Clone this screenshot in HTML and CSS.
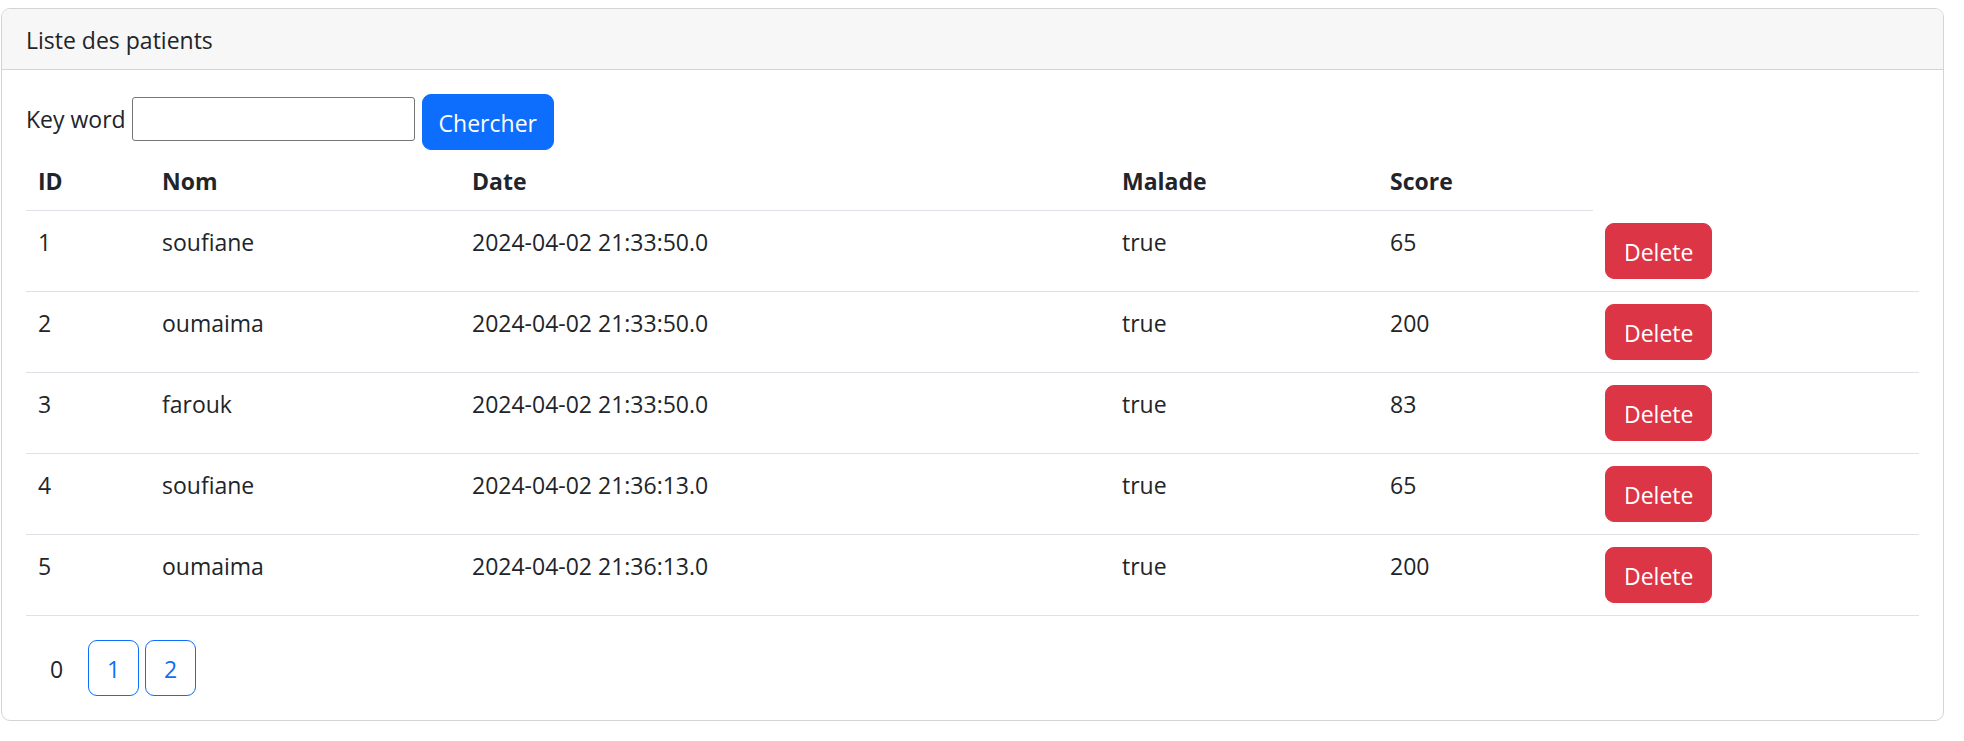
FILE: index.html
```html
<!DOCTYPE html>
<html lang="fr">
<head>
    <meta charset="UTF-8">
    <meta name="viewport" content="width=device-width, initial-scale=1.0">
    <title>Patients</title>
    <link rel="stylesheet" href="styles.css">
</head>
<body>

    <div class="card">
        <div class="card-header">Liste des patients</div>
        <div class="card-body">
            <form class="search" method="get">
                <label for="keyword">Key word</label>
                <input type="text" id="keyword" name="keyword">
                <button type="submit" class="btn btn-primary">Chercher</button>
            </form>

            <table class="table">
                <colgroup>
                    <col class="col-id">
                    <col class="col-nom">
                    <col class="col-date">
                    <col class="col-malade">
                    <col class="col-score">
                    <col>
                </colgroup>
                <thead>
                    <tr>
                        <th>ID</th>
                        <th>Nom</th>
                        <th>Date</th>
                        <th>Malade</th>
                        <th>Score</th>
                    </tr>
                </thead>
                <tbody>
                    <tr>
                        <td>1</td>
                        <td>soufiane</td>
                        <td>2024-04-02 21:33:50.0</td>
                        <td>true</td>
                        <td>65</td>
                        <td class="actions"><a class="btn btn-danger" href="#">Delete</a></td>
                    </tr>
                    <tr>
                        <td>2</td>
                        <td>oumaima</td>
                        <td>2024-04-02 21:33:50.0</td>
                        <td>true</td>
                        <td>200</td>
                        <td class="actions"><a class="btn btn-danger" href="#">Delete</a></td>
                    </tr>
                    <tr>
                        <td>3</td>
                        <td>farouk</td>
                        <td>2024-04-02 21:33:50.0</td>
                        <td>true</td>
                        <td>83</td>
                        <td class="actions"><a class="btn btn-danger" href="#">Delete</a></td>
                    </tr>
                    <tr>
                        <td>4</td>
                        <td>soufiane</td>
                        <td>2024-04-02 21:36:13.0</td>
                        <td>true</td>
                        <td>65</td>
                        <td class="actions"><a class="btn btn-danger" href="#">Delete</a></td>
                    </tr>
                    <tr>
                        <td>5</td>
                        <td>oumaima</td>
                        <td>2024-04-02 21:36:13.0</td>
                        <td>true</td>
                        <td>200</td>
                        <td class="actions"><a class="btn btn-danger" href="#">Delete</a></td>
                    </tr>
                </tbody>
            </table>

            <ul class="pages">
                <li><a class="btn page" href="#">0</a></li>
                <li><a class="btn page btn-outline-primary" href="#">1</a></li>
                <li><a class="btn page btn-outline-primary" href="#">2</a></li>
            </ul>
        </div>
    </div>

</body>
</html>
```

FILE: styles.css
```css
* {
    box-sizing: border-box;
}
body {
    margin: 0;
    font-family: "Segoe UI", "Open Sans", Arial, sans-serif;
    font-size: 23px;
    line-height: 36px;
    color: #212529;
    background-color: #fff;
}
.card {
    margin: 8px 20px 0 1px;
    border: 1px solid #d4d4d5;
    border-radius: 9px;
    overflow: hidden;
}
.card-header {
    padding: 13px 24px 11px;
    background-color: #f7f7f7;
    border-bottom: 1px solid #d4d4d5;
}
.card-body {
    padding: 24px;
}
.search {
    margin: 0;
}
.search input {
    width: 283px;
    height: 44px;
    margin: 0 1px 0 0;
    padding: 1px 3px;
    font: inherit;
    border: 1px solid #767676;
    border-radius: 3px;
}
.btn {
    display: inline-block;
    padding: 10px 18px 8px;
    font: inherit;
    line-height: 36px;
    text-align: center;
    text-decoration: none;
    vertical-align: middle;
    color: #212529;
    border: 1px solid transparent;
    border-radius: 9px;
    background-color: transparent;
    cursor: pointer;
}
.search .btn {
    padding-left: 16px;
    padding-right: 16px;
}
.btn-primary {
    color: #fff;
    background-color: #0d6efd;
    border-color: #0d6efd;
}
.btn-danger {
    color: #fff;
    background-color: #dc3545;
    border-color: #dc3545;
}
.btn-outline-primary {
    color: #0d6efd;
    border-color: #0d6efd;
}
.table {
    width: 100%;
    margin-bottom: 24px;
    border-collapse: collapse;
    table-layout: fixed;
}
.col-id { width: 124px; }
.col-nom { width: 310px; }
.col-date { width: 650px; }
.col-malade { width: 268px; }
.col-score { width: 215px; }
.table th,
.table td {
    padding: 13px 12px 11px;
    text-align: left;
    vertical-align: top;
    border-bottom: 1px solid #dee2e6;
}
.table td.actions {
    padding: 12px;
}
.table th {
    font-weight: 700;
}
.pages {
    display: flex;
    margin: 0;
    padding: 0;
    list-style: none;
}
.page {
    width: 51px;
    margin-left: 6px;
}
.pages li:first-child .page {
    margin-left: 5px;
}
```
